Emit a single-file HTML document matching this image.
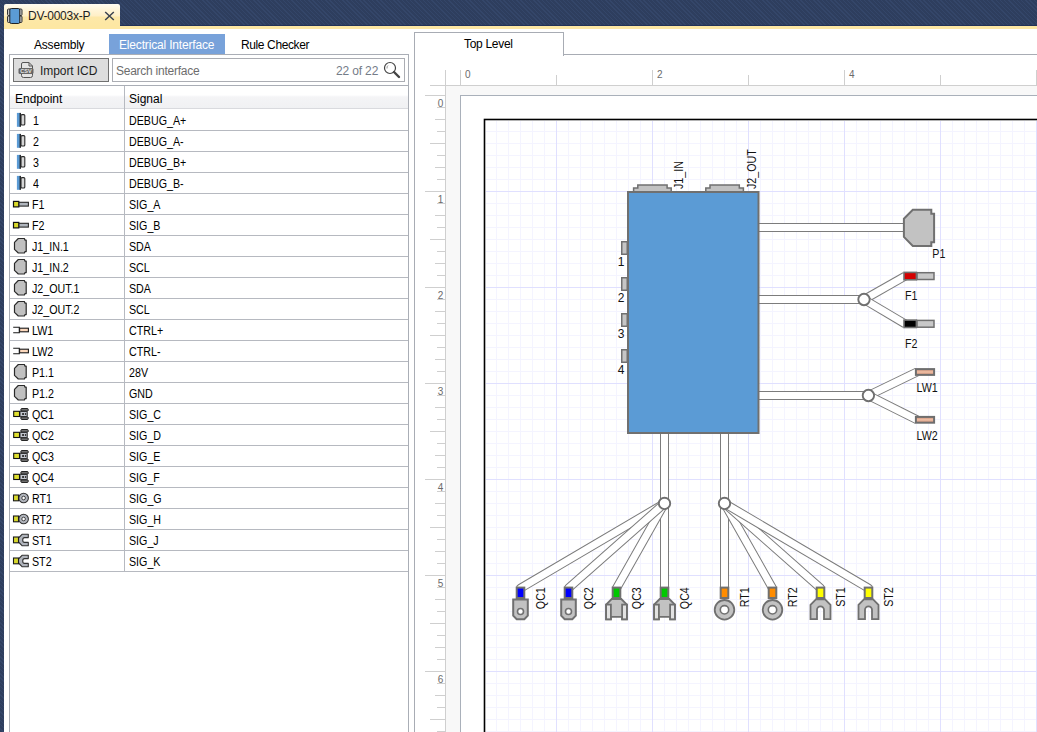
<!DOCTYPE html>
<html><head><meta charset="utf-8">
<style>
html,body{margin:0;padding:0;}
body{width:1037px;height:732px;overflow:hidden;position:relative;background:#fff;font-family:"Liberation Sans",sans-serif;font-size:12px;color:#000;}
.abs{position:absolute;}
#topbar{left:0;top:0;width:1037px;height:26px;background-color:#2e3f60;
 background-image:repeating-linear-gradient(45deg,#2e3e5e 0px,#2e3e5e 2px,#344669 2px,#344669 3px);}
#topline{left:0;top:25px;width:1037px;height:1px;background:#223257;}
#leftstrip{left:0;top:0;width:4px;height:732px;background-color:#2e3f60;
 background-image:repeating-linear-gradient(45deg,#2e3e5e 0px,#2e3e5e 2px,#344669 2px,#344669 3px);}
#yellow{left:4px;top:26px;width:1033px;height:3px;background:#fde7a3;}
#doctab{left:4px;top:4px;width:116px;height:22px;border-radius:2px 2px 0 0;
 background:linear-gradient(#fffcf2 0px,#fff6dc 5px,#ffefc6 12px,#fde8a8 13px,#fde7a3 22px);}
.t{position:absolute;white-space:nowrap;line-height:14px;height:14px;}
.c{transform:scaleX(0.89);transform-origin:0 0;}
#lpanel{left:9px;top:54px;width:398px;height:700px;border:1px solid #aaaeb6;background:#fff;}
#btn{left:13px;top:58px;width:94px;height:22px;border:1px solid #707070;background:#dddddd;}
#search{left:112px;top:58px;width:291px;height:22px;border:1px solid #abadb3;background:#fff;}
#sep{left:10px;top:85px;width:398px;height:1px;background:#aaaeb6;}
#hdr{left:10px;top:86px;width:398px;height:22px;border-bottom:1px solid #d9dade;
 background:linear-gradient(#ffffff 0px,#ffffff 9px,#f4f4f6 11px,#f0f1f3 22px);}
.hline{position:absolute;left:10px;width:398px;height:1px;background:#b6b9c0;}
.vline{position:absolute;width:1px;background:#b6b9c0;}
#rpanel{left:414px;top:54px;width:700px;height:700px;border-left:1px solid #a8acb4;border-top:1px solid #a8acb4;}
#ttab{left:414px;top:32px;width:148px;height:23px;border:1px solid #a8acb4;border-bottom:none;background:#fff;}
</style></head><body>
<svg width="0" height="0" style="position:absolute">
<defs>
<g id="i-pin">
 <rect x="9" y="3.6" width="3.8" height="10.4" rx="1" fill="#d6d6d6" stroke="#2a2a2a" stroke-width="1.1"/>
 <rect x="4.9" y="1.9" width="3.4" height="13.9" fill="#5b9bd5"/>
 <rect x="7.6" y="1.9" width="1.3" height="13.9" fill="#1a1a1a"/>
</g>
<g id="i-fer">
 <rect x="6.6" y="7.3" width="9.8" height="3.8" fill="#b0b6be" stroke="#2a2a2a" stroke-width="1.1"/>
 <rect x="1.5" y="6.4" width="5.3" height="5.5" fill="#d8d82a" stroke="#111" stroke-width="1.2"/>
</g>
<g id="i-con">
 <path d="M2.5 5.4 L6.3 1.5 L12.4 1.5 L12.9 3.2 L14.2 3.2 L14.2 14.6 L12.9 14.6 L12.4 16 L6.3 16 L2.5 12.4 Z" fill="#c0c0c0" stroke="#2a2a2a" stroke-width="1.2" stroke-linejoin="round"/>
</g>
<g id="i-lw">
 <path d="M1.2 6.3 L7.3 6.3 L7.3 11.7 L1.2 11.7" fill="none" stroke="#1a1a1a" stroke-width="1.1"/>
 <rect x="7.6" y="7.2" width="8.8" height="3.6" fill="#fcd8bc" stroke="#1a1a1a" stroke-width="1.1"/>
</g>
<g id="i-qc">
 <rect x="8.9" y="3.6" width="7.3" height="2.6" rx="0.8" fill="#7a7a7a" stroke="#151515" stroke-width="1"/>
 <rect x="8.9" y="11.8" width="7.3" height="2.6" rx="0.8" fill="#7a7a7a" stroke="#151515" stroke-width="1"/>
 <rect x="7.9" y="6.3" width="7.3" height="5.4" rx="0.8" fill="#c2c6ce" stroke="#151515" stroke-width="1"/>
 <rect x="10.1" y="8" width="2" height="2" fill="#3a3a3a"/><rect x="13" y="8" width="1.1" height="2" fill="#3a3a3a"/>
 <rect x="1.7" y="6.3" width="5.8" height="5.2" fill="#e0e030" stroke="#111" stroke-width="1.1"/>
</g>
<g id="i-rt">
 <circle cx="11.6" cy="9" r="4.8" fill="#b0b4bc" stroke="#333" stroke-width="1.1"/>
 <circle cx="11.6" cy="9" r="1.8" fill="#fff" stroke="#333" stroke-width="0.9"/>
 <rect x="1.5" y="6" width="5" height="5.8" fill="#d8d82c" stroke="#1a1a1a" stroke-width="1.1"/>
</g>
<g id="i-st">
 <path d="M6.5 7 L10 3.3 L16.3 3.3 L16.3 6.6 L12.5 6.6 Q10.7 6.6 10.7 9 Q10.7 11.4 12.5 11.4 L16.3 11.4 L16.3 14.7 L10 14.7 L6.5 11 Z" fill="#b0b4bc" stroke="#333" stroke-width="1.1" stroke-linejoin="round"/>
 <rect x="1.5" y="6" width="5" height="5.8" fill="#d8d82c" stroke="#1a1a1a" stroke-width="1.1"/>
</g>
</defs></svg>
<div id="topbar" class="abs"></div>
<div id="topline" class="abs"></div>
<div id="leftstrip" class="abs"></div>
<div id="doctab" class="abs"></div>
<div id="yellow" class="abs"></div>

<!-- doc tab contents -->
<svg class="abs" style="left:7px;top:8px" width="16" height="16" viewBox="0 0 16 16">
 <rect x="0.5" y="1" width="3" height="6.5" rx="1" fill="#c8c8c8" stroke="#333" stroke-width="1"/>
 <rect x="0.5" y="8" width="3" height="6.5" rx="1" fill="#c8c8c8" stroke="#333" stroke-width="1"/>
 <rect x="12" y="1" width="3" height="6.5" rx="1" fill="#c8c8c8" stroke="#333" stroke-width="1"/>
 <rect x="12" y="8" width="3" height="6.5" rx="1" fill="#c8c8c8" stroke="#333" stroke-width="1"/>
 <rect x="2.8" y="0.5" width="10" height="15" rx="1.5" fill="#5b9bd5" stroke="#222" stroke-width="1"/>
</svg>
<div class="t" style="left:28px;top:9px;color:#1e1e1e;letter-spacing:-0.25px">DV-0003x-P</div>
<svg class="abs" style="left:104px;top:11px" width="11" height="10" viewBox="0 0 11 10">
 <path d="M1.2 1 L9.8 9 M9.8 1 L1.2 9" stroke="#3c4350" stroke-width="1.5"/>
</svg>

<!-- left panel tabs -->
<div class="abs" style="left:109px;top:34px;width:116px;height:20px;background:#78a2da;"></div>
<div class="t" style="left:34px;top:38px;letter-spacing:-0.2px">Assembly</div>
<div class="t" style="left:119px;top:38px;color:#fff;letter-spacing:-0.17px">Electrical Interface</div>
<div class="t" style="left:241px;top:38px;letter-spacing:-0.38px">Rule Checker</div>

<div id="lpanel" class="abs"></div>
<div id="btn" class="abs"></div>
<svg class="abs" style="left:18px;top:61px" width="17" height="18" viewBox="0 0 17 18">
 <path d="M3.5 3 Q3.5 1.5 5 1.5 L11 1.5 L14.5 5 L14.5 14.5 Q14.5 16.5 12.5 16.5 L5.5 16.5 Q3.5 16.5 3.5 14.5 Z" fill="#e4e4e4" stroke="#555" stroke-width="1"/>
 <path d="M11 1.5 L11 5 L14.5 5" fill="none" stroke="#555" stroke-width="1"/>
 <rect x="0.5" y="7" width="15" height="6" rx="1.5" fill="#666"/>
 <text x="8" y="12" font-size="5.5" font-family="Liberation Sans" font-weight="bold" fill="#e8e8e8" text-anchor="middle">CSV</text>
</svg>
<div class="t" style="left:40px;top:64px;color:#1e1e1e;letter-spacing:-0.07px">Import ICD</div>
<div id="search" class="abs"></div>
<div class="t" style="left:116px;top:64px;color:#6d6d6d;letter-spacing:-0.25px">Search interface</div>
<div class="t" style="left:336px;top:64px;color:#747c88;letter-spacing:-0.15px">22 of 22</div>
<svg class="abs" style="left:383px;top:61px" width="18" height="18" viewBox="0 0 18 18">
 <circle cx="7" cy="7" r="5.5" fill="none" stroke="#444" stroke-width="1.2"/>
 <path d="M5 4.5 Q3.8 5.5 4 7.5" fill="none" stroke="#999" stroke-width="1"/>
 <path d="M11 11 L16 16" stroke="#444" stroke-width="2.4" stroke-linecap="round"/>
</svg>
<div id="sep" class="abs"></div>
<div id="hdr" class="abs"></div>
<div class="vline" style="left:124px;top:86px;height:485px;"></div>
<div class="t" style="left:15px;top:92px">Endpoint</div>
<div class="t" style="left:129px;top:92px">Signal</div>
<!--ROWS-->
<div class="hline" style="top:130px"></div>
<svg class="abs" style="left:12px;top:111px" width="18" height="18"><use href="#i-pin"/></svg>
<div class="t c" style="left:33px;top:114px">1</div>
<div class="t c" style="left:129px;top:114px">DEBUG_A+</div>
<div class="hline" style="top:151px"></div>
<svg class="abs" style="left:12px;top:132px" width="18" height="18"><use href="#i-pin"/></svg>
<div class="t c" style="left:33px;top:135px">2</div>
<div class="t c" style="left:129px;top:135px">DEBUG_A-</div>
<div class="hline" style="top:172px"></div>
<svg class="abs" style="left:12px;top:153px" width="18" height="18"><use href="#i-pin"/></svg>
<div class="t c" style="left:33px;top:156px">3</div>
<div class="t c" style="left:129px;top:156px">DEBUG_B+</div>
<div class="hline" style="top:193px"></div>
<svg class="abs" style="left:12px;top:174px" width="18" height="18"><use href="#i-pin"/></svg>
<div class="t c" style="left:33px;top:177px">4</div>
<div class="t c" style="left:129px;top:177px">DEBUG_B-</div>
<div class="hline" style="top:214px"></div>
<svg class="abs" style="left:12px;top:195px" width="18" height="18"><use href="#i-fer"/></svg>
<div class="t c" style="left:32px;top:198px">F1</div>
<div class="t c" style="left:129px;top:198px">SIG_A</div>
<div class="hline" style="top:235px"></div>
<svg class="abs" style="left:12px;top:216px" width="18" height="18"><use href="#i-fer"/></svg>
<div class="t c" style="left:32px;top:219px">F2</div>
<div class="t c" style="left:129px;top:219px">SIG_B</div>
<div class="hline" style="top:256px"></div>
<svg class="abs" style="left:12px;top:237px" width="18" height="18"><use href="#i-con"/></svg>
<div class="t c" style="left:32px;top:240px">J1_IN.1</div>
<div class="t c" style="left:129px;top:240px">SDA</div>
<div class="hline" style="top:277px"></div>
<svg class="abs" style="left:12px;top:258px" width="18" height="18"><use href="#i-con"/></svg>
<div class="t c" style="left:32px;top:261px">J1_IN.2</div>
<div class="t c" style="left:129px;top:261px">SCL</div>
<div class="hline" style="top:298px"></div>
<svg class="abs" style="left:12px;top:279px" width="18" height="18"><use href="#i-con"/></svg>
<div class="t c" style="left:32px;top:282px">J2_OUT.1</div>
<div class="t c" style="left:129px;top:282px">SDA</div>
<div class="hline" style="top:319px"></div>
<svg class="abs" style="left:12px;top:300px" width="18" height="18"><use href="#i-con"/></svg>
<div class="t c" style="left:32px;top:303px">J2_OUT.2</div>
<div class="t c" style="left:129px;top:303px">SCL</div>
<div class="hline" style="top:340px"></div>
<svg class="abs" style="left:12px;top:321px" width="18" height="18"><use href="#i-lw"/></svg>
<div class="t c" style="left:32px;top:324px">LW1</div>
<div class="t c" style="left:129px;top:324px">CTRL+</div>
<div class="hline" style="top:361px"></div>
<svg class="abs" style="left:12px;top:342px" width="18" height="18"><use href="#i-lw"/></svg>
<div class="t c" style="left:32px;top:345px">LW2</div>
<div class="t c" style="left:129px;top:345px">CTRL-</div>
<div class="hline" style="top:382px"></div>
<svg class="abs" style="left:12px;top:363px" width="18" height="18"><use href="#i-con"/></svg>
<div class="t c" style="left:32px;top:366px">P1.1</div>
<div class="t c" style="left:129px;top:366px">28V</div>
<div class="hline" style="top:403px"></div>
<svg class="abs" style="left:12px;top:384px" width="18" height="18"><use href="#i-con"/></svg>
<div class="t c" style="left:32px;top:387px">P1.2</div>
<div class="t c" style="left:129px;top:387px">GND</div>
<div class="hline" style="top:424px"></div>
<svg class="abs" style="left:12px;top:405px" width="18" height="18"><use href="#i-qc"/></svg>
<div class="t c" style="left:32px;top:408px">QC1</div>
<div class="t c" style="left:129px;top:408px">SIG_C</div>
<div class="hline" style="top:445px"></div>
<svg class="abs" style="left:12px;top:426px" width="18" height="18"><use href="#i-qc"/></svg>
<div class="t c" style="left:32px;top:429px">QC2</div>
<div class="t c" style="left:129px;top:429px">SIG_D</div>
<div class="hline" style="top:466px"></div>
<svg class="abs" style="left:12px;top:447px" width="18" height="18"><use href="#i-qc"/></svg>
<div class="t c" style="left:32px;top:450px">QC3</div>
<div class="t c" style="left:129px;top:450px">SIG_E</div>
<div class="hline" style="top:487px"></div>
<svg class="abs" style="left:12px;top:468px" width="18" height="18"><use href="#i-qc"/></svg>
<div class="t c" style="left:32px;top:471px">QC4</div>
<div class="t c" style="left:129px;top:471px">SIG_F</div>
<div class="hline" style="top:508px"></div>
<svg class="abs" style="left:12px;top:489px" width="18" height="18"><use href="#i-rt"/></svg>
<div class="t c" style="left:32px;top:492px">RT1</div>
<div class="t c" style="left:129px;top:492px">SIG_G</div>
<div class="hline" style="top:529px"></div>
<svg class="abs" style="left:12px;top:510px" width="18" height="18"><use href="#i-rt"/></svg>
<div class="t c" style="left:32px;top:513px">RT2</div>
<div class="t c" style="left:129px;top:513px">SIG_H</div>
<div class="hline" style="top:550px"></div>
<svg class="abs" style="left:12px;top:531px" width="18" height="18"><use href="#i-st"/></svg>
<div class="t c" style="left:32px;top:534px">ST1</div>
<div class="t c" style="left:129px;top:534px">SIG_J</div>
<div class="hline" style="top:571px"></div>
<svg class="abs" style="left:12px;top:552px" width="18" height="18"><use href="#i-st"/></svg>
<div class="t c" style="left:32px;top:555px">ST2</div>
<div class="t c" style="left:129px;top:555px">SIG_K</div>
<!--/ROWS-->

<!-- right panel -->
<div id="rpanel" class="abs"></div>
<div id="ttab" class="abs"></div>
<div class="t" style="left:464px;top:37px;letter-spacing:-0.3px">Top Level</div>
<!--CANVAS-->
<svg class="abs" style="left:415px;top:55px" width="622" height="677" viewBox="415 55 622 677" font-family="Liberation Sans">
<rect x="446" y="86" width="600" height="700" fill="#f8f8f8"/>
<rect x="460.5" y="95.5" width="700" height="700" fill="#fff" stroke="#a9b0ba" stroke-width="1"/>
<path d="M430 85.5 H1037 M445.5 70 V732" stroke="#cfcfcf" stroke-width="1" fill="none"/>
<path d="M460.5 70 V85 M556.5 75 V85 M652.5 70 V85 M748.5 75 V85 M844.5 70 V85 M940.5 75 V85 M1036.5 70 V85" stroke="#cfcfcf" stroke-width="1"/>
<text x="465" y="78.3" font-size="10" fill="#6b6b6b">0</text>
<text x="657" y="78.3" font-size="10" fill="#6b6b6b">2</text>
<text x="849" y="78.3" font-size="10" fill="#6b6b6b">4</text>
<path d="M425 95.5 H445 M437 107.5 H445 M435 119.5 H445 M437 131.5 H445 M430 143.5 H445 M437 155.5 H445 M435 167.5 H445 M437 179.5 H445 M425 191.5 H445 M437 203.5 H445 M435 215.5 H445 M437 227.5 H445 M430 239.5 H445 M437 251.5 H445 M435 263.5 H445 M437 275.5 H445 M425 287.5 H445 M437 299.5 H445 M435 311.5 H445 M437 323.5 H445 M430 335.5 H445 M437 347.5 H445 M435 359.5 H445 M437 371.5 H445 M425 383.5 H445 M437 395.5 H445 M435 407.5 H445 M437 419.5 H445 M430 431.5 H445 M437 443.5 H445 M435 455.5 H445 M437 467.5 H445 M425 479.5 H445 M437 491.5 H445 M435 503.5 H445 M437 515.5 H445 M430 527.5 H445 M437 539.5 H445 M435 551.5 H445 M437 563.5 H445 M425 575.5 H445 M437 587.5 H445 M435 599.5 H445 M437 611.5 H445 M430 623.5 H445 M437 635.5 H445 M435 647.5 H445 M437 659.5 H445 M425 671.5 H445 M437 683.5 H445 M435 695.5 H445 M437 707.5 H445 M430 719.5 H445 M437 731.5 H445" stroke="#cfcfcf" stroke-width="1"/>
<text x="443.3" y="107.3" font-size="10" fill="#6b6b6b" text-anchor="end">0</text>
<text x="443.3" y="203.3" font-size="10" fill="#6b6b6b" text-anchor="end">1</text>
<text x="443.3" y="299.3" font-size="10" fill="#6b6b6b" text-anchor="end">2</text>
<text x="443.3" y="395.3" font-size="10" fill="#6b6b6b" text-anchor="end">3</text>
<text x="443.3" y="491.3" font-size="10" fill="#6b6b6b" text-anchor="end">4</text>
<text x="443.3" y="587.3" font-size="10" fill="#6b6b6b" text-anchor="end">5</text>
<text x="443.3" y="683.3" font-size="10" fill="#6b6b6b" text-anchor="end">6</text>
<path d="M496.5 121 V732 M508.5 121 V732 M520.5 121 V732 M532.5 121 V732 M544.5 121 V732 M568.5 121 V732 M580.5 121 V732 M592.5 121 V732 M604.5 121 V732 M616.5 121 V732 M628.5 121 V732 M640.5 121 V732 M664.5 121 V732 M676.5 121 V732 M688.5 121 V732 M700.5 121 V732 M712.5 121 V732 M724.5 121 V732 M736.5 121 V732 M760.5 121 V732 M772.5 121 V732 M784.5 121 V732 M796.5 121 V732 M808.5 121 V732 M820.5 121 V732 M832.5 121 V732 M856.5 121 V732 M868.5 121 V732 M880.5 121 V732 M892.5 121 V732 M904.5 121 V732 M916.5 121 V732 M928.5 121 V732 M952.5 121 V732 M964.5 121 V732 M976.5 121 V732 M988.5 121 V732 M1000.5 121 V732 M1012.5 121 V732 M1024.5 121 V732 M486 131.5 H1037 M486 143.5 H1037 M486 155.5 H1037 M486 167.5 H1037 M486 179.5 H1037 M486 203.5 H1037 M486 215.5 H1037 M486 227.5 H1037 M486 239.5 H1037 M486 251.5 H1037 M486 263.5 H1037 M486 275.5 H1037 M486 299.5 H1037 M486 311.5 H1037 M486 323.5 H1037 M486 335.5 H1037 M486 347.5 H1037 M486 359.5 H1037 M486 371.5 H1037 M486 395.5 H1037 M486 407.5 H1037 M486 419.5 H1037 M486 431.5 H1037 M486 443.5 H1037 M486 455.5 H1037 M486 467.5 H1037 M486 491.5 H1037 M486 503.5 H1037 M486 515.5 H1037 M486 527.5 H1037 M486 539.5 H1037 M486 551.5 H1037 M486 563.5 H1037 M486 587.5 H1037 M486 599.5 H1037 M486 611.5 H1037 M486 623.5 H1037 M486 635.5 H1037 M486 647.5 H1037 M486 659.5 H1037 M486 683.5 H1037 M486 695.5 H1037 M486 707.5 H1037 M486 719.5 H1037 M486 731.5 H1037" stroke="#f4f4ff" stroke-width="1"/>
<path d="M556.5 121 V732 M652.5 121 V732 M748.5 121 V732 M844.5 121 V732 M940.5 121 V732 M1036.5 121 V732 M486 191.5 H1037 M486 287.5 H1037 M486 383.5 H1037 M486 479.5 H1037 M486 575.5 H1037 M486 671.5 H1037" stroke="#e0e0ff" stroke-width="1"/>
<rect x="484.5" y="119.5" width="700" height="700" fill="none" stroke="#000" stroke-width="1.6"/>
<path d="M757 227.5 L906 227.5" fill="none" stroke="#7c7c7c" stroke-width="9" stroke-linejoin="round" stroke-linecap="butt"/><path d="M757 227.5 L906 227.5" fill="none" stroke="#fff" stroke-width="7" stroke-linejoin="round" stroke-linecap="butt"/>
<path d="M757 299.5 L864 299.5" fill="none" stroke="#7c7c7c" stroke-width="9" stroke-linejoin="round" stroke-linecap="butt"/><path d="M757 299.5 L864 299.5" fill="none" stroke="#fff" stroke-width="7" stroke-linejoin="round" stroke-linecap="butt"/>
<path d="M864 299.5 L905 276.2" fill="none" stroke="#7c7c7c" stroke-width="9" stroke-linejoin="round" stroke-linecap="butt"/><path d="M864 299.5 L905 276.2" fill="none" stroke="#fff" stroke-width="7" stroke-linejoin="round" stroke-linecap="butt"/>
<path d="M864 299.5 L905 323.8" fill="none" stroke="#7c7c7c" stroke-width="9" stroke-linejoin="round" stroke-linecap="butt"/><path d="M864 299.5 L905 323.8" fill="none" stroke="#fff" stroke-width="7" stroke-linejoin="round" stroke-linecap="butt"/>
<path d="M757 395.5 L868.4 395.5" fill="none" stroke="#7c7c7c" stroke-width="9" stroke-linejoin="round" stroke-linecap="butt"/><path d="M757 395.5 L868.4 395.5" fill="none" stroke="#fff" stroke-width="7" stroke-linejoin="round" stroke-linecap="butt"/>
<path d="M868.4 395.5 L917 372" fill="none" stroke="#7c7c7c" stroke-width="9" stroke-linejoin="round" stroke-linecap="butt"/><path d="M868.4 395.5 L917 372" fill="none" stroke="#fff" stroke-width="7" stroke-linejoin="round" stroke-linecap="butt"/>
<path d="M868.4 395.5 L917 419.8" fill="none" stroke="#7c7c7c" stroke-width="9" stroke-linejoin="round" stroke-linecap="butt"/><path d="M868.4 395.5 L917 419.8" fill="none" stroke="#fff" stroke-width="7" stroke-linejoin="round" stroke-linecap="butt"/>
<path d="M664.5 432 L664.5 594" fill="none" stroke="#7c7c7c" stroke-width="9" stroke-linejoin="round" stroke-linecap="butt"/><path d="M664.5 432 L664.5 594" fill="none" stroke="#fff" stroke-width="7" stroke-linejoin="round" stroke-linecap="butt"/>
<path d="M664.5 503.4 L520.5 588.2 L520.5 594" fill="none" stroke="#7c7c7c" stroke-width="9" stroke-linejoin="round" stroke-linecap="butt"/><path d="M664.5 503.4 L520.5 588.2 L520.5 594" fill="none" stroke="#fff" stroke-width="7" stroke-linejoin="round" stroke-linecap="butt"/>
<path d="M664.5 503.4 L616.5 588.2 L616.5 594" fill="none" stroke="#7c7c7c" stroke-width="9" stroke-linejoin="round" stroke-linecap="butt"/><path d="M664.5 503.4 L616.5 588.2 L616.5 594" fill="none" stroke="#fff" stroke-width="7" stroke-linejoin="round" stroke-linecap="butt"/>
<path d="M664.5 503.4 L568.5 588.2 L568.5 594" fill="none" stroke="#7c7c7c" stroke-width="9" stroke-linejoin="round" stroke-linecap="butt"/><path d="M664.5 503.4 L568.5 588.2 L568.5 594" fill="none" stroke="#fff" stroke-width="7" stroke-linejoin="round" stroke-linecap="butt"/>
<path d="M724.5 432 L724.5 594" fill="none" stroke="#7c7c7c" stroke-width="9" stroke-linejoin="round" stroke-linecap="butt"/><path d="M724.5 432 L724.5 594" fill="none" stroke="#fff" stroke-width="7" stroke-linejoin="round" stroke-linecap="butt"/>
<path d="M724.5 503.4 L772.5 588.2 L772.5 594" fill="none" stroke="#7c7c7c" stroke-width="9" stroke-linejoin="round" stroke-linecap="butt"/><path d="M724.5 503.4 L772.5 588.2 L772.5 594" fill="none" stroke="#fff" stroke-width="7" stroke-linejoin="round" stroke-linecap="butt"/>
<path d="M724.5 503.4 L820.5 588.2 L820.5 594" fill="none" stroke="#7c7c7c" stroke-width="9" stroke-linejoin="round" stroke-linecap="butt"/><path d="M724.5 503.4 L820.5 588.2 L820.5 594" fill="none" stroke="#fff" stroke-width="7" stroke-linejoin="round" stroke-linecap="butt"/>
<path d="M724.5 503.4 L868.5 588.2 L868.5 594" fill="none" stroke="#7c7c7c" stroke-width="9" stroke-linejoin="round" stroke-linecap="butt"/><path d="M724.5 503.4 L868.5 588.2 L868.5 594" fill="none" stroke="#fff" stroke-width="7" stroke-linejoin="round" stroke-linecap="butt"/>
<circle cx="864" cy="299.5" r="5.7" fill="#fff" stroke="#707070" stroke-width="1.9"/>
<circle cx="868.4" cy="395.5" r="5.7" fill="#fff" stroke="#707070" stroke-width="1.9"/>
<circle cx="664.5" cy="503.4" r="5.7" fill="#fff" stroke="#707070" stroke-width="1.9"/>
<circle cx="724.5" cy="503.4" r="5.7" fill="#fff" stroke="#707070" stroke-width="1.9"/>
<rect x="628" y="192" width="130.5" height="241" fill="#5b9bd5" stroke="#707070" stroke-width="2"/>
<path d="M633.6 191 L633.6 188 L637.8000000000001 188 L637.8000000000001 184.9 L667.1 184.9 L667.1 188 L671.2 188 L671.2 191" fill="#c2c2c2" stroke="#707070" stroke-width="1.5"/>
<path d="M705.8 191 L705.8 188 L710.0 188 L710.0 184.9 L739.3 184.9 L739.3 188 L743.4 188 L743.4 191" fill="#c2c2c2" stroke="#707070" stroke-width="1.5"/>
<rect x="621.75" y="241.75" width="5.5" height="12.5" fill="#c6c6c6" stroke="#707070" stroke-width="1.5"/>
<text x="624.5" y="266" font-size="12" fill="#111" text-anchor="end">1</text>
<rect x="621.75" y="277.75" width="5.5" height="12.5" fill="#c6c6c6" stroke="#707070" stroke-width="1.5"/>
<text x="624.5" y="302" font-size="12" fill="#111" text-anchor="end">2</text>
<rect x="621.75" y="313.75" width="5.5" height="12.5" fill="#c6c6c6" stroke="#707070" stroke-width="1.5"/>
<text x="624.5" y="338" font-size="12" fill="#111" text-anchor="end">3</text>
<rect x="621.75" y="349.75" width="5.5" height="12.5" fill="#c6c6c6" stroke="#707070" stroke-width="1.5"/>
<text x="624.5" y="374" font-size="12" fill="#111" text-anchor="end">4</text>
<path d="M903.9 218.7 L912.8 209.8 L931.3 209.8 L931.3 213.8 L934.1 213.8 L934.1 242.2 L931.3 242.2 L931.3 246 L912.8 246 L903.9 236.9 Z" fill="#c2c2c2" stroke="#707070" stroke-width="2"/>
<rect x="917" y="272.70000000000005" width="17" height="6.8" fill="#c8c8c8" stroke="#707070" stroke-width="1.5"/>
<rect x="904" y="272.40000000000003" width="12.4" height="7.4" fill="#d40000" stroke="#707070" stroke-width="1.6"/>
<rect x="917" y="320.40000000000003" width="17" height="6.8" fill="#c8c8c8" stroke="#707070" stroke-width="1.5"/>
<rect x="904" y="320.1" width="12.4" height="7.4" fill="#000" stroke="#707070" stroke-width="1.6"/>
<defs><linearGradient id="cu" x1="0" y1="0" x2="0" y2="1"><stop offset="0" stop-color="#c98c74"/><stop offset="0.5" stop-color="#f0c0a6"/><stop offset="1" stop-color="#c98c74"/></linearGradient></defs>
<rect x="915.9" y="369.1" width="18.2" height="5.8" fill="url(#cu)" stroke="#6e6e6e" stroke-width="2"/>
<rect x="915.9" y="416.90000000000003" width="18.2" height="5.8" fill="url(#cu)" stroke="#6e6e6e" stroke-width="2"/>
<text transform="translate(932.3,258) scale(0.89,1)" font-size="12" fill="#111">P1</text>
<text transform="translate(905,299.8) scale(0.89,1)" font-size="12" fill="#111">F1</text>
<text transform="translate(905,348) scale(0.89,1)" font-size="12" fill="#111">F2</text>
<text transform="translate(916.5,392) scale(0.89,1)" font-size="12" fill="#111">LW1</text>
<text transform="translate(916.5,440.2) scale(0.89,1)" font-size="12" fill="#111">LW2</text>
<text transform="translate(683.3,189) rotate(-90) scale(0.89,1)" font-size="12" fill="#111">J1_IN</text>
<text transform="translate(755.6,189) rotate(-90) scale(0.89,1)" font-size="12" fill="#111">J2_OUT</text>
<path d="M513.2 599.6 L527.8 599.6 L527.8 615.6 L524.3 619.3 L516.7 619.3 L513.2 615.6 Z" fill="#c2c2c2" stroke="#707070" stroke-width="2"/>
<circle cx="520.5" cy="611.5" r="3" fill="#fff" stroke="#707070" stroke-width="1.6"/>
<rect x="516.7" y="587.6" width="7.6" height="10.4" fill="#0000ff" stroke="#707070" stroke-width="2"/>
<text transform="translate(544.9,587.2) rotate(-90) scale(0.89,1)" font-size="12" fill="#111" text-anchor="end">QC1</text>
<path d="M561.2 599.6 L575.8 599.6 L575.8 615.6 L572.3 619.3 L564.7 619.3 L561.2 615.6 Z" fill="#c2c2c2" stroke="#707070" stroke-width="2"/>
<circle cx="568.5" cy="611.5" r="3" fill="#fff" stroke="#707070" stroke-width="1.6"/>
<rect x="564.7" y="587.6" width="7.6" height="10.4" fill="#0000ff" stroke="#707070" stroke-width="2"/>
<text transform="translate(592.9,587.2) rotate(-90) scale(0.89,1)" font-size="12" fill="#111" text-anchor="end">QC2</text>
<path d="M611.7 599 L621.3 599 L626.9 604.6 L626.9 619.3 L622.1 619.3 L622.1 616.8 L610.9 616.8 L610.9 619.3 L606.1 619.3 L606.1 604.6 Z" fill="#c2c2c2" stroke="#707070" stroke-width="1.8" stroke-linejoin="miter"/>
<rect x="606.1" y="604.6" width="4.8" height="14.7" fill="#e2e2e2" stroke="#707070" stroke-width="1.8"/>
<rect x="622.1" y="604.6" width="4.8" height="14.7" fill="#e2e2e2" stroke="#707070" stroke-width="1.8"/>
<rect x="612.7" y="587.6" width="7.6" height="10.4" fill="#00c800" stroke="#707070" stroke-width="2"/>
<text transform="translate(640.9,587.2) rotate(-90) scale(0.89,1)" font-size="12" fill="#111" text-anchor="end">QC3</text>
<path d="M659.7 599 L669.3 599 L674.9 604.6 L674.9 619.3 L670.1 619.3 L670.1 616.8 L658.9 616.8 L658.9 619.3 L654.1 619.3 L654.1 604.6 Z" fill="#c2c2c2" stroke="#707070" stroke-width="1.8" stroke-linejoin="miter"/>
<rect x="654.1" y="604.6" width="4.8" height="14.7" fill="#e2e2e2" stroke="#707070" stroke-width="1.8"/>
<rect x="670.1" y="604.6" width="4.8" height="14.7" fill="#e2e2e2" stroke="#707070" stroke-width="1.8"/>
<rect x="660.7" y="587.6" width="7.6" height="10.4" fill="#00c800" stroke="#707070" stroke-width="2"/>
<text transform="translate(688.9,587.2) rotate(-90) scale(0.89,1)" font-size="12" fill="#111" text-anchor="end">QC4</text>
<circle cx="724.5" cy="609.8" r="9.8" fill="#c2c2c2" stroke="#707070" stroke-width="1.8"/>
<circle cx="724.5" cy="609.8" r="4.2" fill="#fff" stroke="#707070" stroke-width="1.6"/>
<rect x="720.7" y="587.6" width="7.6" height="10.4" fill="#ff8c00" stroke="#707070" stroke-width="2"/>
<text transform="translate(748.9,587.2) rotate(-90) scale(0.89,1)" font-size="12" fill="#111" text-anchor="end">RT1</text>
<circle cx="772.5" cy="609.8" r="9.8" fill="#c2c2c2" stroke="#707070" stroke-width="1.8"/>
<circle cx="772.5" cy="609.8" r="4.2" fill="#fff" stroke="#707070" stroke-width="1.6"/>
<rect x="768.7" y="587.6" width="7.6" height="10.4" fill="#ff8c00" stroke="#707070" stroke-width="2"/>
<text transform="translate(796.9,587.2) rotate(-90) scale(0.89,1)" font-size="12" fill="#111" text-anchor="end">RT2</text>
<path d="M815.9 599.4 L825.1 599.4 L830.5 604.8 L830.5 619.2 L824.0 619.2 L824.0 609.8 A3.5 3.5 0 0 0 817.0 609.8 L817.0 619.2 L810.5 619.2 L810.5 604.8 Z" fill="#c2c2c2" stroke="#707070" stroke-width="1.8" stroke-linejoin="miter"/>
<rect x="816.7" y="587.6" width="7.6" height="10.4" fill="#ffff00" stroke="#707070" stroke-width="2"/>
<text transform="translate(844.9,587.2) rotate(-90) scale(0.89,1)" font-size="12" fill="#111" text-anchor="end">ST1</text>
<path d="M863.9 599.4 L873.1 599.4 L878.5 604.8 L878.5 619.2 L872.0 619.2 L872.0 609.8 A3.5 3.5 0 0 0 865.0 609.8 L865.0 619.2 L858.5 619.2 L858.5 604.8 Z" fill="#c2c2c2" stroke="#707070" stroke-width="1.8" stroke-linejoin="miter"/>
<rect x="864.7" y="587.6" width="7.6" height="10.4" fill="#ffff00" stroke="#707070" stroke-width="2"/>
<text transform="translate(892.9,587.2) rotate(-90) scale(0.89,1)" font-size="12" fill="#111" text-anchor="end">ST2</text>
</svg>
<!--/CANVAS-->
</body></html>
